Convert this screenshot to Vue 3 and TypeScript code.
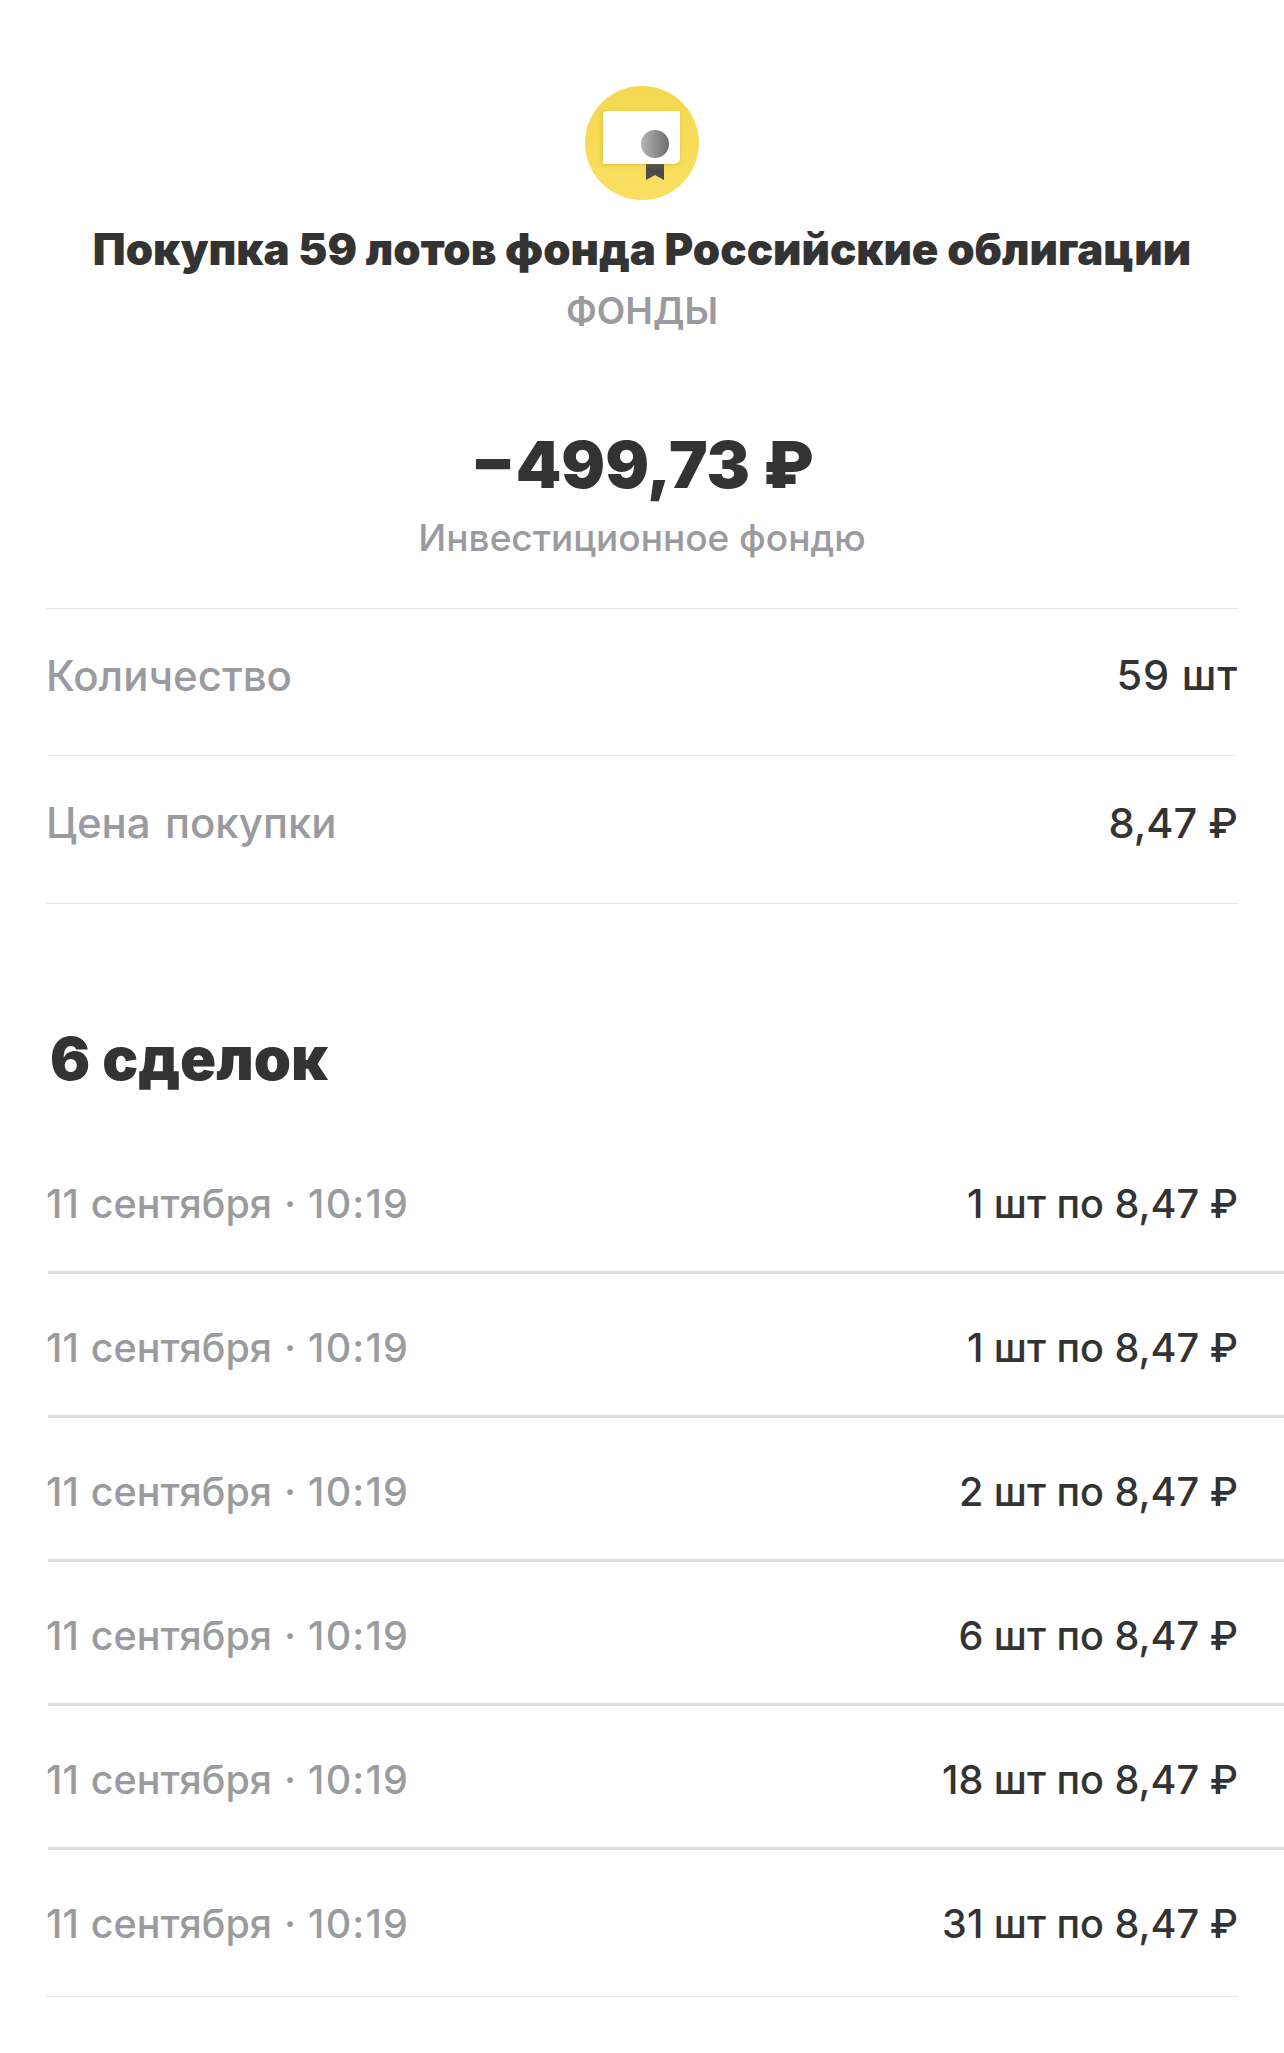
<script setup lang="ts">
interface Deal { qty: number }
const deals: Deal[] = [{ qty: 1 }, { qty: 1 }, { qty: 2 }, { qty: 6 }, { qty: 18 }, { qty: 31 }]
</script>

<template>
  <main class="page">
    <header class="head">
      <svg class="logo" width="114" height="114" viewBox="0 0 114 114" aria-hidden="true">
        <defs>
          <linearGradient id="disc" x1="0" y1="0" x2="0" y2="1">
            <stop offset="0" stop-color="#f4d84f" />
            <stop offset="1" stop-color="#fbdf62" />
          </linearGradient>
          <linearGradient id="seal" x1="0" y1="0" x2="1" y2="0">
            <stop offset="0" stop-color="#b4b4b4" />
            <stop offset="1" stop-color="#6e6e6e" />
          </linearGradient>
          <filter id="soft" x="-20%" y="-20%" width="140%" height="140%">
            <feDropShadow dx="-1" dy="1" stdDeviation="2.5" flood-color="#a88a10" flood-opacity="0.35" />
          </filter>
        </defs>
        <circle cx="57" cy="57" r="57" fill="url(#disc)" />
        <path d="M61 78h18v16l-9-5-9 5z" fill="#4a4a4a" />
        <path d="M18 29a4 4 0 0 1 4-4h73v47a6 6 0 0 1-6 6H18z" fill="#fff" filter="url(#soft)" />
        <circle cx="70" cy="58" r="14" fill="url(#seal)" />
      </svg>
      <h1 class="title">Покупка 59 лотов фонда Российские облигации</h1>
      <p class="kind">ФОНДЫ</p>
      <p class="amount">−499,73 ₽</p>
      <p class="account">Инвестиционное фондю</p>
    </header>

    <section class="facts">
      <div class="fact">
        <span class="label">Количество</span>
        <span class="value">59 шт</span>
      </div>
      <div class="fact">
        <span class="label">Цена покупки</span>
        <span class="value">8,47 ₽</span>
      </div>
    </section>

    <h2 class="deals-title">6 сделок</h2>

    <section class="deals">
      <div v-for="(deal, i) in deals" :key="i" class="deal">
        <span class="label">11 сентября · <span class="time">10:19</span></span>
        <span class="value">{{ deal.qty }} шт по 8,47 ₽</span>
      </div>
    </section>
  </main>
</template>

<style scoped>
.page {
  width: 1284px;
  height: 2053px;
  box-sizing: border-box;
  padding-top: 86px;
  background: #fff;
  color: #333333;
  font-family: Inter, "Noto Sans", sans-serif;
  overflow: hidden;
}
.head {
  display: flex;
  flex-direction: column;
  align-items: center;
  height: 522px;
}
.logo { display: block; flex: none; }
.title {
  margin: 22px 0 0;
  font-size: 43.800px;
  line-height: 56px;
  font-weight: 900;
  white-space: nowrap;
}
.kind {
  margin: 11px 0 0;
  font-size: 37px;
  line-height: 44px;
  font-weight: 600;
  color: #9a9ba0;
}
.amount {
  margin: 93px 0 0;
  font-size: 65px;
  line-height: 78px;
  font-weight: 900;
  white-space: nowrap;
}
.account {
  margin: 12px 0 0;
  font-size: 37px;
  line-height: 44px;
  font-weight: 500;
  color: #9a9ba0;
}
.facts {
  margin: 0 46px;
  border-top: 1.500px solid #e8e8e8;
  border-bottom: 1.500px solid #e8e8e8;
}
.fact {
  display: flex;
  justify-content: space-between;
  align-items: center;
  height: 147px;
  box-sizing: border-box;
  padding-bottom: 14px;
}
.fact:first-child {
  margin: 0 2px;
  border-bottom: 1.500px solid #e8e8e8;
}
.fact:first-child .label { margin-left: -2px; }
.fact:first-child .value { margin-right: -2px; letter-spacing: 0.800px; }
.label { color: #9a9ba0; font-weight: 500; font-size: 39.500px; white-space: nowrap; word-spacing: 1.500px; }
.time { letter-spacing: 1.200px; }
.value { font-weight: 500; font-size: 39.600px; white-space: nowrap; }
.fact .label { font-size: 42px; word-spacing: 3px; }
.fact .value { font-size: 41.500px; }
.deals-title {
  margin: 114px 0 0 50px;
  font-size: 59.700px;
  line-height: 80px;
  font-weight: 900;
}
.deals { margin-top: 32px; padding-left: 48px; }
.deal {
  display: flex;
  justify-content: space-between;
  align-items: center;
  height: 144px;
  box-sizing: border-box;
  padding: 6px 46px 0 0;
  border-bottom: 3px solid #e0e0e0;
}
.deal .label { margin-left: -2px; }
.deal:last-child {
  height: 147px;
  margin-left: -2px;
  margin-right: 46px;
  padding: 4px 0 3px;
  border-bottom: 1.500px solid #e8e8e8;
}
.deal:last-child .label { margin-left: 0; }
</style>
